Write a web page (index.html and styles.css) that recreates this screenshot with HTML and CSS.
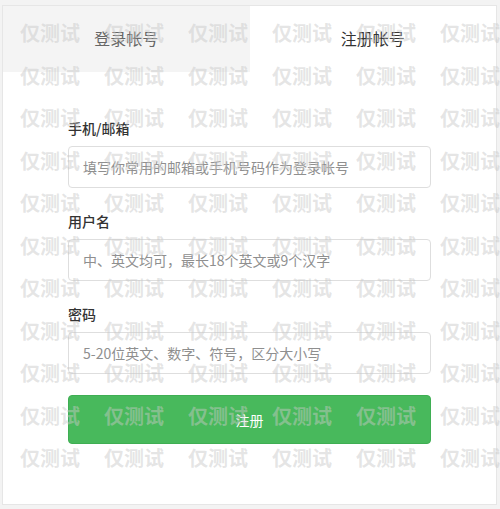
FILE: index.html
```
<!DOCTYPE html>
<html lang="zh-CN">
<head>
<meta charset="utf-8">
<link rel="stylesheet" href="styles.css">
</head>
<body>
<div class="page">
  <div class="panel">
    <div class="tabs">
      <div class="tab tab-off">登录帐号</div>
      <div class="tab tab-on">注册帐号</div>
    </div>
    <form class="form">
      <div class="field">
        <label class="label">手机/邮箱</label>
        <input class="input" type="text" placeholder="填写你常用的邮箱或手机号码作为登录帐号">
      </div>
      <div class="field">
        <label class="label">用户名</label>
        <input class="input" type="text" placeholder="中、英文均可，最长18个英文或9个汉字">
      </div>
      <div class="field">
        <label class="label">密码</label>
        <input class="input" type="password" placeholder="5-20位英文、数字、符号，区分大小写">
      </div>
      <button class="submit" type="button">注册</button>
    </form>
  </div>
  <div class="watermark">
    <span>仅测试</span><span>仅测试</span><span>仅测试</span><span>仅测试</span><span>仅测试</span><span>仅测试</span>
    <span>仅测试</span><span>仅测试</span><span>仅测试</span><span>仅测试</span><span>仅测试</span><span>仅测试</span>
    <span>仅测试</span><span>仅测试</span><span>仅测试</span><span>仅测试</span><span>仅测试</span><span>仅测试</span>
    <span>仅测试</span><span>仅测试</span><span>仅测试</span><span>仅测试</span><span>仅测试</span><span>仅测试</span>
    <span>仅测试</span><span>仅测试</span><span>仅测试</span><span>仅测试</span><span>仅测试</span><span>仅测试</span>
    <span>仅测试</span><span>仅测试</span><span>仅测试</span><span>仅测试</span><span>仅测试</span><span>仅测试</span>
    <span>仅测试</span><span>仅测试</span><span>仅测试</span><span>仅测试</span><span>仅测试</span><span>仅测试</span>
    <span>仅测试</span><span>仅测试</span><span>仅测试</span><span>仅测试</span><span>仅测试</span><span>仅测试</span>
    <span>仅测试</span><span>仅测试</span><span>仅测试</span><span>仅测试</span><span>仅测试</span><span>仅测试</span>
    <span>仅测试</span><span>仅测试</span><span>仅测试</span><span>仅测试</span><span>仅测试</span><span>仅测试</span>
    <span>仅测试</span><span>仅测试</span><span>仅测试</span><span>仅测试</span><span>仅测试</span><span>仅测试</span>
  </div>
</div>
</body>
</html>
```

FILE: styles.css
```
* { box-sizing: border-box; }

html, body {
  margin: 0;
  padding: 0;
  background: #f3f3f3;
  font-family: "Noto Sans CJK SC", "Noto Sans", "Liberation Sans", sans-serif;
}

.page {
  position: relative;
  width: 500px;
  height: 509px;
  padding: 5px 3px 4px 2px;
  overflow: hidden;
}

.panel {
  height: 100%;
  background: #fff;
  border: 1px solid #e6e6e6;
}

.tabs {
  display: flex;
  height: 66px;
}

.tab {
  flex: 1;
  display: flex;
  align-items: center;
  justify-content: center;
  font-size: 16px;
  padding-bottom: 2px;
}

.tab-off {
  background: #f4f4f4;
  color: #666;
}

.tab-on {
  background: #fff;
  color: #333;
}

.form {
  display: flex;
  flex-direction: column;
  padding: 46px 65px 0 65px;
}

.field {
  display: flex;
  flex-direction: column;
  margin-bottom: 23px;
}

.label {
  font-size: 14px;
  line-height: 20px;
  height: 20px;
  color: #333;
  font-weight: 500;
  margin-bottom: 8px;
}

.input {
  height: 42px;
  border: 1px solid #dedede;
  border-radius: 4px;
  padding: 0 14px;
  font-family: inherit;
  font-size: 14px;
  color: #333;
  outline: none;
  background: #fff;
}

.input::placeholder {
  color: #8f8f8f;
}

.submit {
  margin-top: -2px;
  height: 49px;
  border: 1px solid #3fae53;
  border-radius: 4px;
  background: #48b95c;
  color: #fff;
  font-family: inherit;
  font-size: 14px;
  cursor: pointer;
}

.watermark {
  position: absolute;
  left: 20px;
  top: 22px;
  display: grid;
  grid-template-columns: repeat(6, 84px);
  grid-auto-rows: 42.5px;
  pointer-events: none;
  z-index: 2;
}

.watermark span {
  font-size: 20px;
  line-height: 22px;
  font-weight: 700;
  color: rgba(200, 200, 200, 0.48);
  white-space: nowrap;
}
```
